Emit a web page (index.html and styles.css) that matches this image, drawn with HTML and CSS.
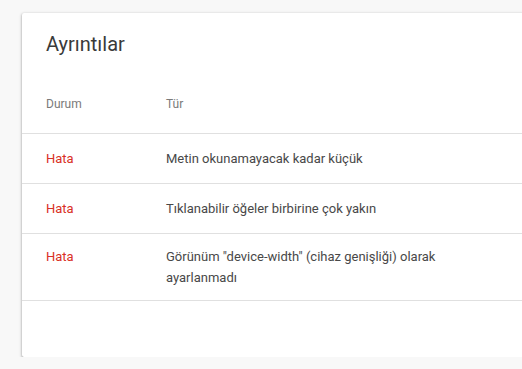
FILE: index.html
```html
<!DOCTYPE html>
<html lang="tr">
<head>
<meta charset="utf-8">
<link rel="stylesheet" href="styles.css">
</head>
<body>
<div class="page">
  <section class="card">
    <h2 class="title">Ayrıntılar</h2>
    <div class="table">
      <div class="row head">
        <div class="c1">Durum</div>
        <div class="c2">Tür</div>
      </div>
      <div class="row">
        <div class="c1 err">Hata</div>
        <div class="c2">Metin okunamayacak kadar küçük</div>
      </div>
      <div class="row">
        <div class="c1 err">Hata</div>
        <div class="c2">Tıklanabilir öğeler birbirine çok yakın</div>
      </div>
      <div class="row">
        <div class="c1 err">Hata</div>
        <div class="c2">Görünüm "device-width" (cihaz genişliği) olarak ayarlanmadı</div>
      </div>
    </div>
    <div class="footer"></div>
  </section>
</div>
</body>
</html>
```

FILE: styles.css
```css
html, body {
  margin: 0;
  padding: 0;
  background: #f8f8f8;
  overflow: hidden;
}
.page {
  padding: 13px 0 0 22px;
  font-family: Roboto, "Noto Sans", Arial, sans-serif;
}
.card {
  width: 620px;
  background: #fff;
  border-radius: 2px;
  box-shadow: 0 1px 2px rgba(0,0,0,0.3), 0 1px 3px 1px rgba(0,0,0,0.12);
  padding-top: 17px;
}
.title {
  margin: 0 0 38px 24px;
  font-size: 20px;
  line-height: 28px;
  font-weight: 400;
  color: #3a3a3a;
}
.row {
  display: flex;
  align-items: flex-start;
  box-sizing: border-box;
  min-height: 50px;
  padding: 12px 0 12px 24px;
  border-bottom: 1px solid #e0e0e0;
  font-size: 13px;
  line-height: 21px;
  color: #484848;
}
.row .c1 { width: 120px; flex: none; }
.row .c2 { max-width: 300px; }
.row.head {
  min-height: 0;
  padding: 0 0 21px 24px;
  font-size: 12px;
  line-height: 16px;
  color: #7a7a7a;
}
.row:not(.head):not(:last-child) { padding-top: 14px; }
.err { color: #d93025; }
.footer { height: 56px; }
```
